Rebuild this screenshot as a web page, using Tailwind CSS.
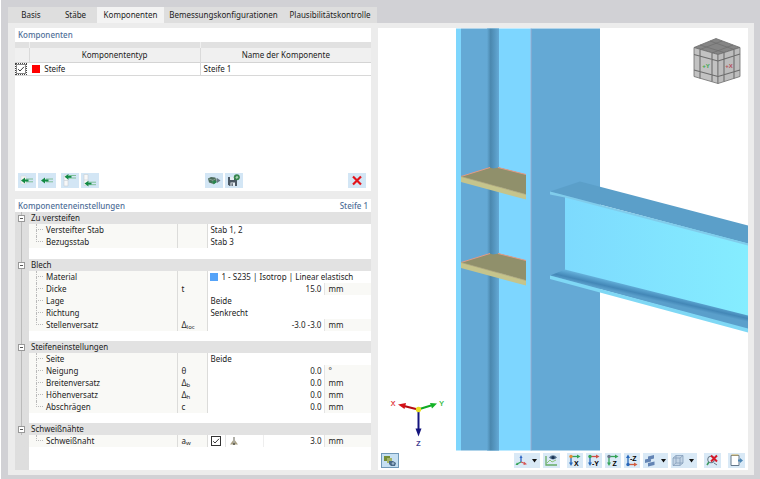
<!DOCTYPE html>
<html lang="de">
<head>
    <meta charset="UTF-8">
    <meta name="viewport" content="width=device-width, initial-scale=1.0">
    <title>Komponenten</title>
    <script src="https://cdn.jsdelivr.net/npm/@tailwindcss/browser@4"></script>
</head>
<body class="flex min-h-screen flex-col border-l border-white bg-[#d1d1d5] pt-[7px] pr-[6px] pb-1 pl-[7px] font-['Noto_Sans',sans-serif] text-[8px] leading-3 text-[#1c1c1c]">
    <!-- Tabs -->
    <div role="tablist" class="flex h-4 items-stretch">
        <button role="tab" class="w-[46px] bg-[#dedede]">Basis</button>
        <button role="tab" class="w-[43px] bg-[#dedede]">Stäbe</button>
        <button role="tab" aria-selected="true" class="w-[67px] bg-[#f3f3f3]">Komponenten</button>
        <button role="tab" class="w-[119px] bg-[#dedede]">Bemessungskonfigurationen</button>
        <button role="tab" class="w-[94px] bg-[#dedede]">Plausibilitätskontrolle</button>
    </div>

    <!-- Tab content -->
    <main class="grid flex-1 grid-cols-[356fr_370fr] gap-[7px] bg-[#ececec] py-[5px] pr-[6px] pl-[7px]">
        <div class="flex flex-col gap-2">
            <!-- Component list -->
            <section class="flex min-h-[163px] flex-col bg-white">
                <h2 class="h-[14px] px-[3px] leading-[14px] font-medium text-[#4f6f98]">Komponenten</h2>
                <table class="w-full table-fixed border-collapse">
                    <colgroup><col class="w-[4%]"><col class="w-[48%]"><col class="w-[48%]"></colgroup>
                    <thead>
                        <tr class="h-[6px] bg-[#e1e1e1]"><td></td><td class="border-x border-[#f0f0f0]"></td><td></td></tr>
                        <tr class="h-[14px] border-b border-[#d4d4d4] bg-[#f0f0f0]">
                            <th></th>
                            <th class="border-x border-[#dadada] font-normal">Komponententyp</th>
                            <th class="font-normal">Name der Komponente</th>
                        </tr>
                    </thead>
                    <tbody>
                        <tr class="h-3 border-b border-[#d8d8d8]">
                            <td>
                                <label class="grid size-3 place-items-center border border-dotted border-[#444]">
                                    <input type="checkbox" checked aria-label="Steife aktiv" class="size-[10px] appearance-none border border-[#888] bg-white [grid-area:1/1]">
                                    <svg viewBox="0 0 8 8" class="pointer-events-none size-2 [grid-area:1/1]"><path d="M1.2 4.2 3 6l4-4.2" fill="none" stroke="#222" stroke-width="0.9"/></svg>
                                </label>
                            </td>
                            <td class="border-r border-[#d8d8d8]">
                                <div class="flex items-center gap-1 pl-[3px]"><span class="size-2 bg-[#ff0000]"></span>Steife</div>
                            </td>
                            <td class="pl-[3px]">Steife 1</td>
                        </tr>
                    </tbody>
                </table>
                <div class="mt-auto flex items-center gap-[2px] pr-[5px] pb-[3px] pl-[3px]">
                    <button aria-label="Links einfügen" class="h-[15px] w-[18px] bg-[#d3e6f5]">
                        <svg viewBox="0 0 18 15"><path d="M3 3h5v8H3z" fill="#f4f4f4" stroke="#ccd4da" stroke-width=".5"/><path d="M8 6h7M8 8.800h7" stroke="#7fbf98"/><path d="M3 7.400 7 4.400v2h3.500v2H7v2z" fill="#128a43"/></svg>
                    </button>
                    <button aria-label="Einfügen" class="mr-[3px] h-[15px] w-[18px] bg-[#d3e6f5]">
                        <svg viewBox="0 0 18 15"><path d="M8 6h7M8 8.800h7" stroke="#7fbf98"/><path d="M3 7.400 7 4.400v2h3.500v2H7v2z" fill="#128a43"/></svg>
                    </button>
                    <button aria-label="Davor einfügen" class="h-[15px] w-[18px] bg-[#d3e6f5]">
                        <svg viewBox="0 0 18 15"><path d="M3 2h4v11H3zM3 7.500h4" fill="#f8f8f8" stroke="#c7ced4" stroke-width=".6"/><path d="M8 2.500h7M8 5h7" stroke="#7fbf98"/><path d="M3.500 3.800 7.500 1v2h3v1.800h-3v2z" fill="#128a43"/></svg>
                    </button>
                    <button aria-label="Danach einfügen" class="h-[15px] w-[18px] bg-[#d3e6f5]">
                        <svg viewBox="0 0 18 15"><path d="M3 1.500h4v11H3zM3 7h4" fill="#f8f8f8" stroke="#c7ced4" stroke-width=".6"/><path d="M8 9.200h7M8 11.700h7" stroke="#7fbf98"/><path d="M3.500 10.500 7.500 7.700v2h3v1.800h-3v2z" fill="#128a43"/></svg>
                    </button>
                    <span class="flex-1"></span>
                    <button aria-label="Bibliothek" class="h-[15px] w-[18px] bg-[#d3e6f5]">
                        <svg viewBox="0 0 18 15"><path d="M3 5.500 6 4l4 .5 1.500 1V9L8.500 11 4 9.500z" fill="#4d6b5c"/><path d="M4 6l4 1.300v3M8 7.300 11 5.500" stroke="#9cb9a8" fill="none" stroke-width=".7"/><path d="M5 8.500h3.500V7l3.500 2-3.500 2.500V10z" fill="#25874c"/><path d="M12 5l3.500 2.500L12 10z" fill="#687785"/></svg>
                    </button>
                    <button aria-label="Speichern" class="h-[15px] w-[18px] bg-[#d3e6f5]">
                        <svg viewBox="0 0 18 15"><path d="M3 4h9v9H4.500L3 11.500z" fill="#4a5763"/><path d="M5 4h4v3H5zM5.500 9.500h4.500V13H5.500z" fill="#e7eef4"/><path d="M6.500 10.300h1.300V13H6.500z" fill="#4a5763"/><circle cx="11.800" cy="4.300" r="3" fill="#36864e"/><path d="M10.300 4.500 12 2.700l1.500 1.500-1.700 1.700z" fill="#a9d1b3"/></svg>
                    </button>
                    <span class="flex-1"></span>
                    <button aria-label="Löschen" class="h-[15px] w-[18px] bg-[#d3e6f5]">
                        <svg viewBox="0 0 18 15"><path d="M5 3.500 13 11.500M13 3.500 5 11.500" stroke="#e3141b" stroke-width="2.200"/></svg>
                    </button>
                </div>
            </section>

            <!-- Settings -->
            <section class="flex flex-1 flex-col bg-white">
                <h2 class="flex h-[13px] justify-between px-[3px] leading-[13px] font-medium text-[#4f6f98]"><span>Komponenteneinstellungen</span><span>Steife 1</span></h2>
                <div class="flex flex-1 flex-col bg-linear-to-r from-[#dedede] from-[14px] to-white to-[14px]">
                    <table class="w-full table-fixed border-collapse">
                        <colgroup><col class="w-[14px]"><col><col class="w-[30px]"><col class="w-[117px]"><col class="w-[46px]"></colgroup>
                        <tbody id="settings"></tbody>
                    </table>
                </div>
            </section>
        </div>

        <!-- Model view -->
        <section class="flex flex-col bg-white">
            <svg viewBox="378 28 370 422" class="w-full flex-1 font-['Liberation_Sans',sans-serif]" preserveAspectRatio="xMidYMid meet">
                <defs>
                    <linearGradient id="groove"><stop offset="0" stop-color="#64a9d5"/><stop offset=".3" stop-color="#4b88ae"/><stop offset=".6" stop-color="#5596bf"/><stop offset="1" stop-color="#64a9d5"/></linearGradient>
                    <linearGradient id="web"><stop offset="0" stop-color="#7ddafe"/><stop offset="1" stop-color="#85edff"/></linearGradient>
                    <linearGradient id="fillet" gradientUnits="userSpaceOnUse" x1="656" y1="290" x2="653" y2="303"><stop offset="0" stop-color="#67b4de"/><stop offset=".5" stop-color="#4387b7"/><stop offset=".75" stop-color="#5a9fcb"/><stop offset="1" stop-color="#5a9fcb"/></linearGradient>
                    <g id="plate">
                        <path d="M461 176 490 167 493 168 499 167 526 174V194z" fill="#90906b"/>
                        <path d="M461 176 490 167M498 167 526 174" stroke="#e29a86" fill="none"/>
                        <path d="M461 176 526 194V199L461 181.500z" fill="#c5c48c"/>
                        <path d="M461 176 526 194" stroke="#b3a476" stroke-width=".7"/>
                    </g>
                </defs>
                <!-- Column -->
                <path d="M456 28h5v422h-5z" fill="#7ed6fd"/>
                <path d="M461 28h38v422h-38z" fill="#64a9d5"/>
                <path d="M487 28h12v422h-12z" fill="url(#groove)"/>
                <path d="M499 28h32v422h-32z" fill="#7dd6ff"/>
                <path d="M531 28h69v422h-69z" fill="#64a9d5"/>
                <path d="M531 28v422" stroke="#a9a9cc" stroke-width=".8"/>
                <!-- Stiffeners -->
                <use href="#plate"/>
                <use href="#plate" y="86"/>
                <!-- Beam -->
                <path d="M565 196 748 242V318L565 271z" fill="url(#web)"/>
                <path d="M550 191 580 181 748 225V243z" fill="#5b9fc9"/>
                <path d="M550 191 748 243V245L565 197 550 194z" fill="#80cceb"/>
                <path d="M550 275 565 269 748 315V329z" fill="url(#fillet)"/>
                <path d="M550 275 748 328V332L550 278.500z" fill="#7fd8f5"/>
                <!-- Axes -->
                <path d="M418 409 404 405.500" stroke="#b50d12" stroke-width="2"/>
                <path d="M398 404 406 402.500 404.500 408.500z" fill="#d41117"/>
                <path d="M418 409 431 405" stroke="#10aa22" stroke-width="2"/>
                <path d="M437 403 430 402.500 432 408z" fill="#14b326"/>
                <path d="M418.500 409V429" stroke="#14147d" stroke-width="2"/>
                <path d="M415.500 428H421.500L418.500 436z" fill="#14147d"/>
                <circle cx="418.500" cy="409" r="2.700" fill="#e9df20"/>
                <g font-size="7" text-anchor="middle" stroke-width=".2">
                    <text x="393" y="405" fill="#e0242a" stroke="#e0242a">X</text>
                    <text x="441.500" y="405" fill="#18b52b" stroke="#18b52b">Y</text>
                    <text x="418.500" y="445.500" fill="#17177f" stroke="#17177f">Z</text>
                </g>
                <!-- View cube -->
                <g stroke="#6d6d6d" stroke-width=".8" stroke-linejoin="round">
                    <path d="M694 47 716 38 740 47 718 54z" fill="#858585"/>
                    <path d="M694 47 718 54V83L694 76z" fill="#c2c2c2"/>
                    <path d="M718 54 740 47V76L718 83z" fill="#bdbdbd"/>
                    <path d="M700 49V78M712 52.500V81M724 52V81M734 49V78M694 54 718 60.500 740 53.500M694 69.500 718 76 740 69.500" fill="none" stroke-width="1.100"/>
                    <path d="M700 44.500 724 52M710 40.500 734 49M722 40.500 700 49M733 44.500 712 52.500" fill="none" stroke-width=".7"/>
                </g>
                <g font-size="6" font-weight="bold" text-anchor="middle">
                    <text x="706" y="67" fill="#38a94a">+Y</text>
                    <text x="729" y="67" fill="#b5505a">+X</text>
                </g>
            </svg>
            <!-- View toolbar -->
            <div class="flex h-[19px] items-center px-[3px]">
                <button aria-label="Darstellung" class="h-[15px] w-[18px] border border-[#6f98b8] bg-[#c5dff2]">
                    <svg viewBox="0 0 16 13"><path d="M2 2h6v5H2z" fill="#758d37"/><path d="M5 4h5v5H5z" fill="#a4b568"/><path d="M7 7h4l3 2-1 3H9L7 10z" fill="#496987"/><circle cx="11" cy="9.500" r="1.300" fill="#9bb5cd"/></svg>
                </button>
                <div class="ml-auto flex items-center gap-[3px]">
                    <button aria-label="Achsensystem" class="h-[15px] w-[26px] bg-[#d9e9f6]">
                        <svg viewBox="0 0 26 15"><path d="M7 9V4" stroke="#2f67c4" stroke-width="1.300"/><path d="M5.500 5 7 2 8.500 5z" fill="#2f67c4"/><path d="M7 9 3 11" stroke="#35a458" stroke-width="1.300"/><path d="M1.500 12 3 9.500 4.500 12z" fill="#35a458"/><path d="M7 9l4 1.500" stroke="#d55454" stroke-width="1.300"/><path d="M10 8.800 13 11.300 9.500 12z" fill="#d55454"/><path d="M18 6h5l-2.500 3.500z" fill="#111"/></svg>
                    </button>
                    <button aria-label="Ansicht zeigen" class="h-[15px] w-[17px] bg-[#d9e9f6]">
                        <svg viewBox="0 0 17 15"><path d="M3 3v9h11" stroke="#66ab65" fill="none" stroke-width="1.300"/><path d="M4 10l3-3 2 2 4-2" stroke="#8cc477" fill="none"/><path d="M6 4.500Q10 0 14 4.500 10 8.500 6 4.500z" fill="#53718f"/><circle cx="10" cy="4.500" r="1.500" fill="#1b3454"/></svg>
                    </button>
                    <button aria-label="Ansicht in X" class="ml-1 h-[15px] w-4 bg-[#d9e9f6]">
                        <svg viewBox="0 0 16 15"><path d="M4 3.500h7" stroke="#35a458" stroke-width="1.300"/><path d="M10 1.500 13.500 3.500 10 5.500z" fill="#35a458"/><path d="M4 4v6" stroke="#2768bb" stroke-width="1.300"/><path d="M2 9.500h4L4 13z" fill="#2768bb"/><circle cx="4" cy="3.500" r="1.700" fill="#e28d36"/><text x="7" y="12.500" font-size="7" font-weight="bold" font-family="Liberation Sans">X</text></svg>
                    </button>
                    <button aria-label="Ansicht in -Y" class="h-[15px] w-4 bg-[#d9e9f6]">
                        <svg viewBox="0 0 16 15"><path d="M4 3.500h7" stroke="#cf5145" stroke-width="1.300"/><path d="M10 1.500 13.500 3.500 10 5.500z" fill="#cf5145"/><path d="M4 4v6" stroke="#2768bb" stroke-width="1.300"/><path d="M2 9.500h4L4 13z" fill="#2768bb"/><circle cx="4" cy="3.500" r="1.700" fill="#35a458"/><text x="6" y="12.500" font-size="7" font-weight="bold" font-family="Liberation Sans">-Y</text></svg>
                    </button>
                    <button aria-label="Ansicht in Z" class="h-[15px] w-4 bg-[#d9e9f6]">
                        <svg viewBox="0 0 16 15"><path d="M4 3.500h7" stroke="#35a458" stroke-width="1.300"/><path d="M10 1.500 13.500 3.500 10 5.500z" fill="#35a458"/><path d="M4 4v6" stroke="#35a458" stroke-width="1.300"/><path d="M2 9.500h4L4 13z" fill="#35a458"/><circle cx="4" cy="3.500" r="1.700" fill="#687789"/><text x="7.500" y="12.500" font-size="7" font-weight="bold" font-family="Liberation Sans">Z</text></svg>
                    </button>
                    <button aria-label="Ansicht in -Z" class="h-[15px] w-4 bg-[#d9e9f6]">
                        <svg viewBox="0 0 16 15"><path d="M4 11.500h7" stroke="#d25c3f" stroke-width="1.300"/><path d="M10 9.500 13.500 11.500 10 13.500z" fill="#d25c3f"/><path d="M4 11V5" stroke="#2768bb" stroke-width="1.300"/><path d="M2 5h4L4 1.500z" fill="#2768bb"/><circle cx="4" cy="11.500" r="1.700" fill="#2768bb"/><text x="6" y="8" font-size="7" font-weight="bold" font-family="Liberation Sans">-Z</text></svg>
                    </button>
                    <button aria-label="Anzeigemodus" class="h-[15px] w-[25px] bg-[#d9e9f6]">
                        <svg viewBox="0 0 25 15"><path d="M5 3.500 11 2v3.500L5 7zM2 6.500 8 5v3.500L2 10zM5 10 11.500 8.500V12L5 13.500z" fill="#6384b4"/><path d="M18 6h5l-2.500 3.500z" fill="#111"/></svg>
                    </button>
                    <button aria-label="Box" class="h-[15px] w-[26px] bg-[#d9e9f6]">
                        <svg viewBox="0 0 26 15"><path d="M2 5 5 2.500h7V10l-3 2.500H2zM2 5h7v7.500M9 5l3-2.500M5 2.500V10L2 12.500M5 10h7" fill="#c3d4e5" stroke="#86a0bb" stroke-width=".8"/><path d="M18 6h5l-2.500 3.500z" fill="#111"/></svg>
                    </button>
                    <button aria-label="Zoom zurücksetzen" class="ml-1 h-[15px] w-[17px] bg-[#d9e9f6]">
                        <svg viewBox="0 0 17 15"><circle cx="7" cy="6.500" r="3.200" fill="#e4eef6" stroke="#66798a" stroke-width="1.100"/><path d="M5 9 3 12" stroke="#3c9a60" stroke-width="1.600"/><path d="M7 2.500 13 8.500M13 2.500 7 8.500" stroke="#d51a2b" stroke-width="2"/><path d="M10 10l3 2" stroke="#66798a"/></svg>
                    </button>
                    <button aria-label="Neues Fenster" class="ml-1 h-[15px] w-[17px] bg-[#d9e9f6]">
                        <svg viewBox="0 0 17 15"><path d="M3 2.500h8v10H3z" fill="#fff" stroke="#65788b"/><path d="M3.500 2h7" stroke="#d8b25a"/><path d="M10 6.500h2V5l3 2.500-3 2.500V8.500h-2z" fill="#4c86b4"/></svg>
                    </button>
                </div>
            </div>
        </section>
    </main>

    <script>
        // [name, symbol, subscript, value, unit]
        const groups = [
            { title: 'Zu versteifen', rows: [
                ['Versteifter Stab', '', '', 'Stab 1, 2'],
                ['Bezugsstab', '', '', 'Stab 3']
            ] },
            { title: 'Blech', rows: [
                ['Material', '', '', '<div class="flex items-center gap-[3px]"><span class="size-2 bg-[#55a3f8]"></span>1 - S235 | Isotrop | Linear elastisch</div>'],
                ['Dicke', 't', '', '15.0', 'mm'],
                ['Lage', '', '', 'Beide'],
                ['Richtung', '', '', 'Senkrecht'],
                ['Stellenversatz', 'Δ', 'loc', '-3.0 -3.0', 'mm']
            ] },
            { title: 'Steifeneinstellungen', rows: [
                ['Seite', '', '', 'Beide'],
                ['Neigung', 'θ', '', '0.0', '°'],
                ['Breitenversatz', 'Δ', 'b', '0.0', 'mm'],
                ['Höhenversatz', 'Δ', 'h', '0.0', 'mm'],
                ['Abschrägen', 'c', '', '0.0', 'mm']
            ] },
            { title: 'Schweißnähte', rows: [
                ['Schweißnaht', 'a', 'w', '3.0', 'mm', true]
            ] }
        ];

        const weld = `
            <div class="flex h-3 items-center">
                <label class="grid h-3 w-[15px] place-items-center border-r border-[#e4e4e4] pr-1">
                    <input type="checkbox" checked aria-label="Schweißnaht" class="size-[10px] appearance-none border border-[#333] bg-white [grid-area:1/1]">
                    <svg viewBox="0 0 8 8" class="pointer-events-none size-2 [grid-area:1/1]"><path d="M1.200 4.200 3 6l4-4.200" fill="none" stroke="#222" stroke-width=".9"/></svg>
                </label>
                <svg viewBox="0 0 10 10" class="ml-[3px] size-[10px]"><path d="M4.300 1h1.400v5H4.300z" fill="#8f8e84"/><path d="M4.300 4 1 8.500h3.300zM5.700 4 9 8.500H5.700z" fill="#aaa184"/><path d="M4 6.500h2V9H4z" fill="#6d6c60"/></svg>
                <span class="ml-6 h-3 flex-1 border-l border-[#eee]">3.0</span>
            </div>`;

        const tbody = document.getElementById('settings');
        groups.forEach((group, g) => {
            const last = g === groups.length - 1;
            let html = `
                <tr class="h-3 bg-[#e2e2e2]">
                    <td class="bg-[#dedede] bg-linear-to-r from-[#bbb] to-[#bbb] bg-[length:1px_100%] bg-[position:6px_0] bg-no-repeat">
                        <button aria-label="${group.title} einklappen" class="ml-[3px] grid size-[7px] place-items-center border border-[#999] bg-white"><span class="h-px w-[3px] bg-[#555]"></span></button>
                    </td>
                    <th colspan="4" class="pl-[2px] text-left font-normal">${group.title}</th>
                </tr>`;
            group.rows.forEach(([name, symbol, sub, value, unit, isWeld], i) => {
                const end = i === group.rows.length - 1;
                html += `
                <tr class="h-3">
                    <td class="${last ? '' : 'bg-linear-to-r from-[#bbb] to-[#bbb] bg-[length:1px_100%] bg-[position:6px_0] bg-no-repeat'}"></td>
                    <td class="bg-[#f9f9f6]">
                        <div class="flex h-3 pl-[7px]">
                            <span class="flex w-[7px] flex-col"><span class="h-[6px] border-b border-l border-dotted border-[#bbb]"></span><span class="h-[6px] ${end ? '' : 'border-l border-dotted border-[#bbb]'}"></span></span>
                            <span class="pl-[3px]">${name}</span>
                        </div>
                    </td>
                    <td class="border-x border-[#dcdcda] bg-[#f9f9f6] pl-[3px]">${symbol}<span class="inline-block translate-y-px text-[6px] leading-none">${sub}</span></td>
                    ${unit
                        ? `<td class="border-r border-[#e4e4e4] pr-[3px] pl-[3px] text-right">${isWeld ? weld : value}</td><td class="bg-[#f9f9f6] pl-[3px]">${unit}</td>`
                        : `<td colspan="2" class="pl-[2px]">${value}</td>`}
                </tr>`;
            });
            if (!last) {
                html += `<tr class="${g === 0 ? 'h-[11px]' : 'h-[10px]'}"><td class="bg-linear-to-r from-[#bbb] to-[#bbb] bg-[length:1px_100%] bg-[position:6px_0] bg-no-repeat"></td><td colspan="4"></td></tr>`;
            }
            tbody.innerHTML += html;
        });
    </script>
</body>
</html>
